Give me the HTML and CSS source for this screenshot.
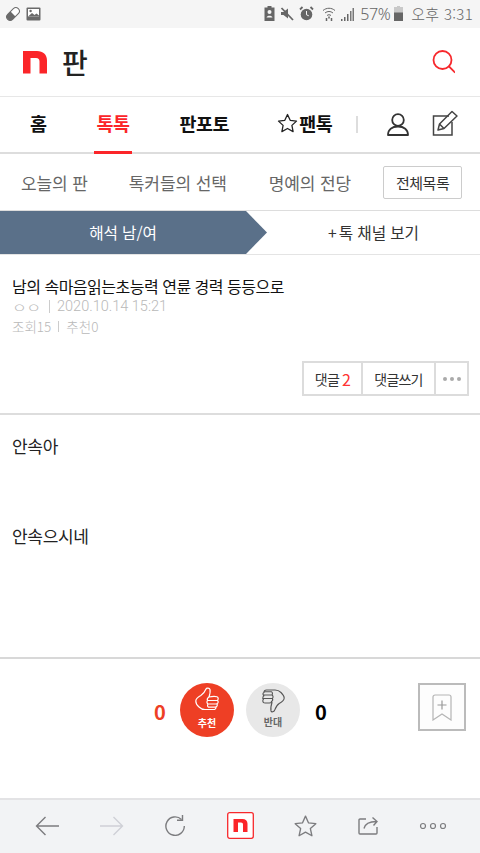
FILE: index.html
```html
<!DOCTYPE html>
<html lang="ko">
<head>
<meta charset="utf-8">
<title>판</title>
<link rel="stylesheet" href="styles.css">
</head>
<body>
<div class="phone">
  <div class="status">
    <div class="status-left">
      <svg class="st-ic" width="16" height="16" viewBox="0 0 16 16"><g transform="rotate(45 8 8)"><rect x="4.500" y="0.500" width="7" height="15" rx="3.500" fill="#fff" stroke="#6a6a6a" stroke-width="1"/><path d="M4.500 8V4a3.500 3.500 0 0 1 7 0v4z" fill="#6a6a6a" transform="rotate(180 8 8)"/></g></svg>
      <svg class="st-ic" width="15" height="14" viewBox="0 0 15 14"><rect width="14" height="13" x="0.500" y="0.500" rx="1" fill="#6a6a6a"/><rect x="2" y="2" width="11" height="7.500" fill="#fff"/><circle cx="4.600" cy="4" r="1.200" fill="#6a6a6a"/><path d="M2 9.500 6 6l2.500 2 2-1.500 2.500 2v1z" fill="#6a6a6a"/></svg>
    </div>
    <div class="status-right">
      <svg width="11" height="15" viewBox="0 0 11 15"><path d="M3.500 0h4v1.500h3V15H.5V1.500h3z" fill="#666"/><circle cx="5.500" cy="6" r="2" fill="#f5f5f5"/><path d="M2.500 11.500c.5-2.500 5.500-2.500 6 0z" fill="#f5f5f5"/></svg>
      <svg width="14" height="14" viewBox="0 0 14 14"><path d="M1 5h2.500L8 1.500v10L3.500 8H1z" fill="#666"/><path d="M1.500 1 13 13" stroke="#666" stroke-width="1.800"/></svg>
      <svg width="15" height="15" viewBox="0 0 15 15"><circle cx="7.500" cy="8.500" r="5.800" fill="#666"/><path d="M7.500 5v3.800l2.300 1" stroke="#f5f5f5" fill="none"/><path d="M1 3.500 3.500 1M14 3.500 11.500 1" stroke="#666" stroke-width="1.800"/></svg>
      <svg class="wifi" width="14" height="16" viewBox="0 0 14 16" fill="none" stroke="#666"><path d="M1 4.500c3.500-3 8.500-3 12 0M3 7c2.500-2 5.500-2 8 0M5 9.500c1.300-1 2.700-1 4 0"/><path d="M4.500 12v3M9.500 12v3M7 10.500v2" stroke-width="1.500"/></svg>
      <svg width="14" height="14" viewBox="0 0 14 14"><path d="M1 12h1.500v2H1zM4 10h1.500v4H4zM7 7h1.500v7H7z" fill="#666"/><path d="M10 4h1.500v10H10zM12.500 1H14v13h-1.500z" fill="#777"/></svg>
      <span class="pct">57%</span>
      <svg class="batt" width="9" height="15" viewBox="0 0 9 15"><path d="M3 0h3v1h3v14H0V1h3z" fill="#c9c9c9"/><rect y="6.500" width="9" height="8.500" fill="#666"/></svg>
      <span class="clock">오후 3:31</span>
    </div>
  </div>

  <header class="brand">
    <div class="logo-wrap">
      <svg class="logo" width="24" height="23" viewBox="0 0 24 23"><path d="M0 0h14c6 0 10 3.500 10 9.500V22.500h-7.500V10.500c0-2-1-3.500-3.500-3.500H7.500v15.500H0z" fill="#fb2529"/></svg>
      <span class="pann">판</span>
    </div>
    <svg class="search" width="24" height="25" viewBox="0 0 24 25" fill="none" stroke="#f7282c" stroke-width="1.800"><circle cx="11.500" cy="10" r="9"/><path d="m18 16.500 5.500 5.500" stroke-linecap="square"/></svg>
  </header>

  <nav class="gnb">
    <a class="gnb-item home">홈</a>
    <a class="gnb-item talk">톡톡</a>
    <a class="gnb-item photo">판포토</a>
    <a class="gnb-item fan"><svg width="21" height="20" viewBox="0 0 21 20" fill="none" stroke="#222" stroke-width="1.300" stroke-linejoin="round"><path d="m10.500 1.500 2.700 5.800 6.300.8-4.600 4.300 1.200 6.200-5.600-3.100-5.600 3.100 1.200-6.200L1.500 8.100l6.300-.8z"/></svg>팬톡</a>
    <span class="gnb-sep"></span>
    <svg class="gnb-ic user" width="22" height="23" viewBox="0 0 22 23" fill="none" stroke="#333" stroke-width="1.800"><circle cx="11" cy="7" r="5.800"/><path d="M1 22c0-5.500 4-8.500 10-8.500s10 3 10 8.500z" stroke-linejoin="round"/></svg>
    <svg class="gnb-ic write" width="27" height="26" viewBox="0 0 27 26" fill="none" stroke="#444" stroke-width="1.500"><path d="M17 6H1.500v19H20V12"/><path d="M6 20l1.500-6L20 1.500 25 6 12 18.500z" stroke-linejoin="round"/><path d="M7.500 14 12 18.500"/></svg>
  </nav>

  <div class="subnav">
    <a class="sub-a">오늘의 판</a>
    <a class="sub-b">톡커들의 선택</a>
    <a class="sub-c">명예의 전당</a>
    <button class="all">전체목록</button>
  </div>

  <div class="tabs">
    <div class="tab-on">해석 남/여</div>
    <div class="tab-off"><span class="plus">+</span>톡 채널 보기</div>
  </div>

  <article class="post">
    <h1 class="title">남의 속마음읽는초능력 연륜 경력 등등으로</h1>
    <div class="meta"><span class="nick">ㅇㅇ</span><span class="bar"></span><span class="date">2020.10.14 15:21</span></div>
    <div class="meta2"><span>조회15</span><span class="bar2"></span><span>추천0</span></div>
    <div class="actions">
      <div class="btns">
        <a class="btn b1">댓글 <em>2</em></a>
        <a class="btn b2">댓글쓰기</a>
        <a class="btn b3"><i></i><i></i><i></i></a>
      </div>
    </div>
  </article>

  <section class="body-text">
    <p>안속아</p>
    <p class="second">안속으시네</p>
  </section>

  <section class="votes">
    <span class="count red">0</span>
    <div class="vote up">
      <svg width="24" height="25" viewBox="0 0 24 25" fill="none" stroke="#fff" stroke-width="1.200" stroke-linejoin="round"><path d="M.8 14c0-1.500 2.400-4 5-5.500C8.500 6.800 10 4.500 11 2c.5-1.300 3.500-1 4 .5.500 2-.2 5-1 7.500 2.500-.5 6-.8 8-.2 1.500.5 1.500 2.500.5 3.500 1 1 .8 3-.5 3.500.6 1.200.2 2.700-1 3.200.2 1.500-1 2.500-2.500 2.500H10c-3 0-4.500-1-6-2.500C2 18.500.8 16 .8 14z"/><path d="M14 10c-1.500 1-2 2.500-1.500 3.500h10M12.500 13.500c-1 1.500-.5 3 .5 3.500h9M13 17c-.8 1.200-.5 2.800.5 3.200h7.500"/></svg>
      <span>추천</span>
    </div>
    <div class="vote down">
      <svg width="24" height="27" viewBox="0 0 24 27" fill="none" stroke="#555" stroke-width="1.100" stroke-linejoin="round"><path d="M23.200 11c0 1.500-2.400 4-5 5.500-2.700 1.700-3.700 4.500-4.700 7-.5 1.300-3 2-3.500.5-.5-2 .2-6 1-8.500-2.500.5-6 .8-8 .2-1.500-.5-1.500-2.500-.5-3.500-1-1-.8-3 .5-3.500C1.400 7.500 1.800 6 3 5.500 2.800 4 4 3 5.500 3H14c3 0 4.500 1 6 2.500 2 2 3.200 4 3.200 5.500z"/><path d="M10 15c1.500-1 2-2.500 1.500-3.500h-10M11.500 11.500c1-1.500.5-3-.5-3.500H2M11 8c.8-1.200.5-2.800-.5-3.200H3"/></svg>
      <span>반대</span>
    </div>
    <span class="count">0</span>
    <div class="bookmark">
      <svg width="20" height="27" viewBox="0 0 20 27" fill="none" stroke="#b5b5b5" stroke-width="1.200"><path d="M1 26V3a2 2 0 0 1 2-2h14a2 2 0 0 1 2 2v23l-9-6z"/><path d="M10 6.500v9M5.500 11h9" stroke="#999"/></svg>
    </div>
  </section>

  <footer class="toolbar">
    <svg width="24" height="20" viewBox="0 0 24 20" fill="none" stroke="#7c7c7f" stroke-width="1.400"><path d="M24 10H1.500M10.500 1 1.500 10l9 9"/></svg>
    <svg width="24" height="20" viewBox="0 0 24 20" fill="none" stroke="#cfd0d6" stroke-width="1.400"><path d="M0 10h22.500M13.500 1l9 9-9 9"/></svg>
    <svg width="20" height="21" viewBox="0 0 20 21" fill="none" stroke="#7c7c7f" stroke-width="1.400"><path d="M16.500 4.500a9.200 9.200 0 1 0 2.800 6.500"/><path d="M12 5.300h5.500V0"/></svg>
    <svg class="tb-n" width="27" height="27" viewBox="0 0 27 27"><rect x=".7" y=".7" width="25.600" height="25.600" rx="2" fill="#fff" stroke="#f7282c" stroke-width="1.300"/><path d="M6.500 7h9c3 0 5 1.800 5 4.800V20H16v-7.500c0-1.300-.7-2-2-2h-3V20H6.500z" fill="#fb2529"/></svg>
    <svg width="23" height="22" viewBox="0 0 24 23" fill="none" stroke="#7c7c7f" stroke-width="1.400" stroke-linejoin="round"><path d="m12 1.200 3.200 7.100 7.600.8-5.700 5.100 1.600 7.500-6.700-3.800-6.700 3.800 1.600-7.500-5.700-5.100 7.600-.8z"/></svg>
    <svg width="20" height="19" viewBox="0 0 20 19" fill="none" stroke="#7c7c7f" stroke-width="1.400"><path d="M8 3H2a1 1 0 0 0-1 1v13a1 1 0 0 0 1 1h16a1 1 0 0 0 1-1v-6"/><path d="M6 12.500c1-4.500 5-7 12.500-7M14.500 1.500l4.500 4-3.500 4"/></svg>
    <svg width="28" height="8" viewBox="0 0 28 8" fill="none" stroke="#7c7c7f" stroke-width="1.200"><circle cx="4" cy="4" r="2.500"/><circle cx="14" cy="4" r="2.500"/><circle cx="24" cy="4" r="2.500"/></svg>
  </footer>
</div>
</body>
</html>
```

FILE: styles.css
```css
* { box-sizing: border-box; margin: 0; padding: 0; }
html, body { width: 480px; height: 853px; overflow: hidden; background: #fff; }
body { font-family: "Noto Sans CJK KR", "Noto Sans", sans-serif; color: #222; }
.phone { width: 480px; height: 853px; display: flex; flex-direction: column; }

.status { height: 28px; background: #f5f5f5; display: flex; justify-content: space-between; align-items: center; padding: 0 7px 1px 5px; color: #666; flex: none; }
.status-left { display: flex; gap: 5px; align-items: center; }
.status-right { display: flex; align-items: center; gap: 5px; font-weight: 300; }
.wifi { margin-left: 3px; margin-right: -1px; }
.pct { font-size: 16px; font-family: "Noto Sans", sans-serif; font-weight: 300; letter-spacing: -.4px; margin-left: 1px; }
.batt { margin-left: -1px; }
.clock { font-size: 15px; margin-left: 3px; letter-spacing: .3px; }

.brand { height: 69px; flex: none; display: flex; justify-content: space-between; align-items: center; padding: 0 25px 0 23px; border-bottom: 1px solid #e7e7e7; }
.logo-wrap { display: flex; align-items: center; gap: 15px; }
.logo { display: block; }
.pann { font-size: 28px; line-height: 36px; font-weight: 500; color: #222; }

.gnb { height: 57px; flex: none; display: flex; align-items: center; border-bottom: 2px solid #ddd; position: relative; padding-left: 30px; }
.gnb-item { font-size: 18.500px; font-weight: 700; color: #111; letter-spacing: -.5px; display: flex; align-items: center; gap: 1px; height: 100%; padding-bottom: 3px; }
.talk { color: #fb2529; margin-left: 50px; position: relative; }
.talk::after { content: ""; position: absolute; left: -3px; right: -2px; bottom: -2px; height: 3px; background: #fb2529; }
.photo { margin-left: 50px; }
.fan { margin-left: 48px; }
.gnb-sep { width: 2px; height: 17px; background: #ddd; margin-left: 24px; }
.user { margin-left: 29px; }
.write { margin-left: 23px; margin-bottom: 4px; }

.subnav { height: 57px; flex: none; display: flex; align-items: center; border-bottom: 1px solid #ddd; padding-left: 21px; font-size: 17px; color: #666; letter-spacing: -.1px; }
.sub-b { margin-left: 41px; }
.sub-c { margin-left: 42px; }
.all { margin-left: 32px; width: 79px; height: 33px; background: #fff; border: 1px solid #ccc; border-radius: 2px; font: inherit; font-size: 15px; color: #333; letter-spacing: -.5px; }

.tabs { height: 44px; flex: none; display: flex; border-bottom: 1px solid #e4e4e4; }
.tab-on { width: 267px; background: #5a7089; color: #fff; font-size: 15.700px; display: flex; align-items: center; justify-content: center; padding-right: 21px; letter-spacing: -.1px; clip-path: polygon(0 0, 246px 0, 267px 50%, 246px 100%, 0 100%); }
.tab-off { flex: 1; display: flex; align-items: center; justify-content: center; font-size: 15.700px; color: #333; letter-spacing: -.1px; }
.plus { margin-right: 2px; }

.post { height: 160px; flex: none; padding: 19.500px 11px 0 12px; border-bottom: 2px solid #ddd; display: flex; flex-direction: column; }
.title { font-size: 16px; font-weight: 400; line-height: 22px; color: #111; letter-spacing: -.5px; }
.meta, .meta2 { color: #b9b9b9; display: flex; align-items: center; font-weight: 300; }
.meta { height: 20px; line-height: 20px; font-size: 13px; }
.meta2 { height: 19.500px; line-height: 19.500px; font-size: 13.500px; letter-spacing: 0; }
.nick { width: 37px; transform: scaleX(1.25); transform-origin: left center; letter-spacing: -.5px; }
.date { font-family: Roboto, sans-serif; font-size: 14.500px; }
.bar { width: 1px; height: 13px; background: #ccc; margin-right: 7px; }
.bar2 { width: 1px; height: 11px; background: #ccc; margin: 0 7px; }
.actions { display: flex; justify-content: flex-end; margin-top: 25px; }
.btns { display: flex; height: 35px; border: 2px solid #dcdcdc; }
.btn { display: flex; align-items: center; justify-content: center; font-size: 14px; color: #333; letter-spacing: -.8px; border-right: 2px solid #dcdcdc; }
.btn em { font-style: normal; color: #f33; font-size: 16px; margin-left: 3px; }
.b1 { width: 59px; }
.b2 { width: 73px; }
.b3 { width: 31px; border-right: 0; gap: 3px; }
.b3 i { width: 4px; height: 4px; border-radius: 50%; background: #aaa; }

.body-text { height: 244px; flex: none; padding: 18px 12px 0; border-bottom: 2px solid #d8d8d8; font-size: 17px; line-height: 26px; color: #222; letter-spacing: -.3px; }
.second { margin-top: 64px; }

.votes { height: 139px; flex: none; display: flex; align-items: center; position: relative; padding: 0 0 37px 154px; }
.count { font-size: 20px; font-weight: 700; color: #000; width: 12px; padding-top: 2px; }
.count.red { color: #ee3f25; }
.vote { width: 54px; height: 54px; border-radius: 50%; display: flex; flex-direction: column; align-items: center; font-size: 10px; font-weight: 700; padding-top: 4px; line-height: 12px; }
.vote svg { display: block; }
.up { background: #ee3f25; color: #fff; margin-left: 14px; }
.up span { margin-top: 5px; }
.down { background: #e8e8e8; color: #666; margin-left: 12px; margin-right: 15px; }
.down span { margin-top: 2px; }
.bookmark { position: absolute; left: 418px; top: 24px; width: 48px; height: 48px; border: 2px solid #bbb; background: #fdfdfd; display: flex; align-items: center; justify-content: center; }

.toolbar { flex: 1; background: #f2f3f5; border-top: 2px solid #e3e3e5; display: flex; align-items: center; gap: 41px; padding: 0 0 2px 35px; }
.tb-n { margin-left: 1px; margin-right: -1px; }
```
